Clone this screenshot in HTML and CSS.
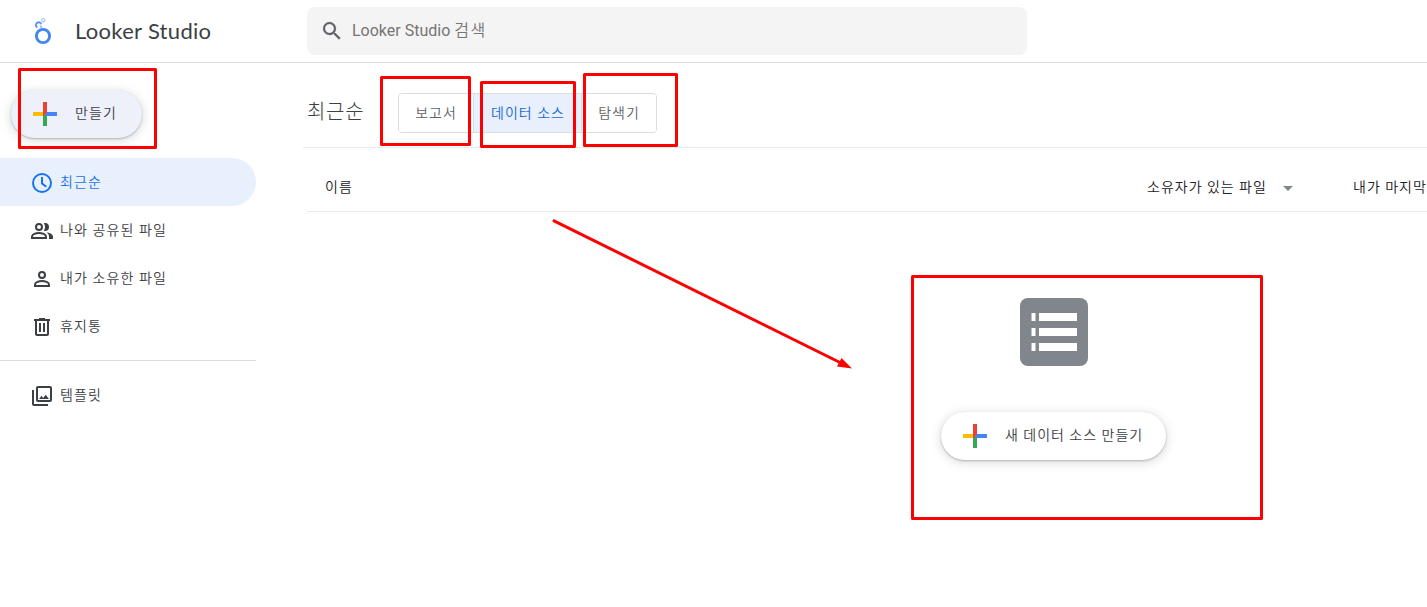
FILE: index.html
```html
<!DOCTYPE html>
<html lang="ko">
<head>
  <meta charset="UTF-8" />
  <title>Looker Studio</title>
  <meta name="viewport" content="width=device-width, initial-scale=1.0" />
  <link rel="stylesheet" href="styles.css">
</head>
<body>
  <header class="header">
    <div class="brand">
      <svg class="logo" width="24" height="30" viewBox="0 0 24 30" fill="none">
        <circle cx="12" cy="20" r="6.6" stroke="#4285f4" stroke-width="2.9" />
        <path d="M6.4 11.400A2.700 2.700 0 1 1 10.200 8.200" stroke="#5b94f5" stroke-width="1.9" />
        <path d="M9.800 9.600 10.200 12.300" stroke="#8ab4f8" stroke-width="1.6" />
        <circle cx="12.200" cy="4.300" r="1.700" stroke="#aecbfa" stroke-width="1.3" />
      </svg>
      <span class="brand-name">Looker Studio</span>
    </div>
    <div class="search">
      <svg width="24" height="24" viewBox="0 0 24 24" fill="#5f6368" stroke="#5f6368" stroke-width="0.2">
        <path d="M15.5 14h-.79l-.28-.27A6.47 6.47 0 0 0 16 9.5 6.5 6.5 0 1 0 9.5 16c1.61 0 3.09-.59 4.23-1.57l.27.28v.79l5 4.99L20.49 19l-4.99-5zm-6 0C7.01 14 5 11.99 5 9.5S7.01 5 9.5 5 14 7.01 14 9.5 11.99 14 9.5 14z" />
      </svg>
      <span>Looker Studio <span class="ko">검색</span></span>
    </div>
  </header>

  <div class="layout">
    <aside class="sidebar">
      <button class="create-btn">
        <svg width="24" height="24" viewBox="0 0 24 24" shape-rendering="crispEdges">
          <path fill="#fbbc04" d="M0 10h12v4H0z" />
          <path fill="#34a853" d="M10 12h4v12h-4z" />
          <path fill="#4285f4" d="M12 10h12v4H12z" />
          <path fill="#ea4335" d="M10 0h4v10l-4 4z" />
        </svg>
        <span>만들기</span>
      </button>

      <nav class="nav">
        <a class="nav-item active">
          <svg width="24" height="24" viewBox="0 0 24 24" fill="none" stroke="currentColor" stroke-width="2">
            <circle cx="12" cy="12" r="9" />
            <path d="M12 6v6.500l4.300 3.300" />
          </svg>
          <span>최근순</span>
        </a>
        <a class="nav-item">
          <svg width="24" height="24" viewBox="0 0 24 24" fill="none" stroke="currentColor" stroke-width="2">
            <circle cx="9" cy="8" r="3" />
            <path d="M2 19v-1.300C2 15.300 6 14 9 14s7 1.300 7 3.700V19z" />
            <path fill="currentColor" stroke="none" d="M13.700 11.800c.800-1.100 1.300-2.400 1.300-3.800s-.500-2.700-1.300-3.800c.400-.100.800-.200 1.300-.200a4 4 0 0 1 0 8c-.500 0-.900-.100-1.300-.200zM16.700 13.200C19.500 13.600 23 15 23 17.500V20h-4v-2.500c0-1.800-.900-3.200-2.300-4.300z" />
          </svg>
          <span>나와 공유된 파일</span>
        </a>
        <a class="nav-item">
          <svg width="24" height="24" viewBox="0 0 24 24" fill="none" stroke="currentColor" stroke-width="2">
            <circle cx="12" cy="8" r="3" />
            <path d="M5 19v-1.300C5 15.300 9 14 12 14s7 1.300 7 3.700V19z" />
          </svg>
          <span>내가 소유한 파일</span>
        </a>
        <a class="nav-item">
          <svg width="24" height="24" viewBox="0 0 24 24" fill="currentColor">
            <path d="M15 4V3H9v1H4v2h1v13c0 1.100.9 2 2 2h10c1.100 0 2-.9 2-2V6h1V4h-5zm2 15H7V6h10v13zM9 8h2v9H9zm4 0h2v9h-2z" />
          </svg>
          <span>휴지통</span>
        </a>
      </nav>

      <nav class="nav templates">
        <a class="nav-item">
          <svg width="24" height="24" viewBox="0 0 24 24" fill="currentColor">
            <path d="M20 4v12H8V4h12m0-2H8c-1.100 0-2 .9-2 2v12c0 1.100.9 2 2 2h12c1.100 0 2-.9 2-2V4c0-1.100-.9-2-2-2zm-8.500 9.670 1.690 2.260 2.480-3.100L19 15H9zM2 6v14c0 1.100.9 2 2 2h14v-2H4V6H2z" />
          </svg>
          <span>템플릿</span>
        </a>
      </nav>
    </aside>

    <main class="main">
      <div class="toolbar">
        <h1>최근순</h1>
        <div class="tabs">
          <button class="tab">보고서</button>
          <button class="tab selected">데이터 소스</button>
          <button class="tab">탐색기</button>
        </div>
      </div>

      <div class="table-head">
        <span class="col-name">이름</span>
        <span class="col-owner">소유자가 있는 파일
          <svg width="10" height="5" viewBox="0 0 10 5"><path d="M0 0h10L5 5z" fill="#80868b" /></svg>
        </span>
        <span class="col-opened">내가 마지막으로</span>
      </div>

      <div class="empty">
        <svg width="68" height="68" viewBox="0 0 68 68">
          <rect width="68" height="68" rx="8" fill="#80868b" />
          <path fill="#fff" d="M11.500 15h4v8h-4zM19 15h38v8H19zM11.500 30h4v8h-4zM19 30h38v8H19zM11.500 45h4v8h-4zM19 45h38v8H19z" />
        </svg>
        <button class="create-btn create-source">
          <svg width="24" height="24" viewBox="0 0 24 24" shape-rendering="crispEdges">
            <path fill="#fbbc04" d="M0 10h12v4H0z" />
            <path fill="#34a853" d="M10 12h4v12h-4z" />
            <path fill="#4285f4" d="M12 10h12v4H12z" />
            <path fill="#ea4335" d="M10 0h4v10l-4 4z" />
          </svg>
          <span>새 데이터 소스 만들기</span>
        </button>
      </div>
    </main>
  </div>

  <!-- red guide marks over the page -->
  <svg class="marks" width="1427" height="607" viewBox="0 0 1427 607" fill="none" stroke="#f00" stroke-width="3" stroke-linejoin="round">
    <rect x="19.500" y="69.500" width="136" height="78" />
    <rect x="381.500" y="77.500" width="88" height="67" />
    <rect x="481.500" y="82.500" width="93" height="64" />
    <rect x="584.500" y="74.500" width="92" height="71" />
    <rect x="912.500" y="276.500" width="349" height="242" />
    <path d="M554 220.800 842 363.500" stroke-linecap="round" />
    <path d="M841.500 358 852 368.500 837 366.500z" fill="#f00" stroke="none" />
  </svg>
</body>
</html>
```
FILE: styles.css
```css
* {
  box-sizing: border-box;
}

body {
  margin: 0;
  height: 100vh;
  overflow: hidden;
  background: #fff;
  color: #3c4043;
  font-family: Roboto, "Noto Sans CJK KR", sans-serif;
  font-size: 14px;
  font-weight: 350;
}

button {
  font: inherit;
  color: inherit;
  letter-spacing: inherit;
  cursor: pointer;
}

svg {
  flex: none;
}

.header {
  display: flex;
  height: 63px;
  border-bottom: 1px solid #dadce0;
  font-weight: 400;
}

.brand {
  display: flex;
  align-items: center;
  width: 307px;
  padding-left: 31px;
}

.brand-name {
  margin: -2px 0 0 20px;
  font-family: Lato, sans-serif;
  font-size: 22px;
  letter-spacing: 0.3px;
}

.search {
  display: flex;
  align-items: center;
  gap: 8px;
  width: 720px;
  height: 48px;
  margin-top: 7px;
  padding-left: 13px;
  border-radius: 8px;
  background: #f4f4f4;
  color: #757575;
  font-size: 16px;
}

.search > span {
  margin-top: -4px;
}

.ko {
  font-weight: 350;
  letter-spacing: 1.5px;
}

.layout {
  display: flex;
}

.sidebar {
  flex: none;
  width: 256px;
  padding-top: 27px;
  letter-spacing: 1.1px;
}

.create-btn {
  display: flex;
  align-items: center;
  gap: 18px;
  width: 131px;
  height: 48px;
  margin: 0 0 0 11px;
  padding: 0 0 0 22px;
  border: none;
  border-radius: 24px;
  background: #eef1fa;
  box-shadow: 0 1px 2px rgba(60, 64, 67, 0.3), 0 2px 8px 2px rgba(60, 64, 67, 0.15);
  white-space: nowrap;
}

.create-btn span {
  margin-top: -4px;
}

.nav {
  margin-top: 20px;
}

.nav-item {
  display: flex;
  align-items: center;
  gap: 6px;
  height: 48px;
  padding: 2px 0 0 30px;
}

.nav-item span {
  margin-top: -5px;
}

.nav-item.active {
  border-radius: 0 24px 24px 0;
  background: #e8f0fe;
  color: #1a73e8;
}

.templates {
  margin-top: 10px;
  padding-top: 10px;
  border-top: 1px solid #dadce0;
}

.main {
  flex: 1;
  min-width: 0;
  margin-left: 47px;
}

.toolbar {
  display: flex;
  align-items: center;
  height: 85px;
  padding: 15px 0 0 4px;
  border-bottom: 1px solid #e8eaed;
}

h1 {
  width: 91px;
  margin: -5px 0 0;
  font-size: 20px;
  font-weight: 300;
  letter-spacing: 0.7px;
}

.tabs {
  display: flex;
  height: 40px;
  border: 1px solid #dadce0;
  border-radius: 4px;
  overflow: hidden;
}

.tab {
  width: 74px;
  padding: 0 0 2px;
  border: none;
  background: #fff;
  color: #5f6368;
  letter-spacing: 1px;
}

.tab.selected {
  width: 109px;
  padding-left: 1px;
  border: solid #dadce0;
  border-width: 0 1px;
  background: #e8f0fe;
  color: #1967d2;
}

.table-head {
  display: flex;
  align-items: center;
  height: 64px;
  margin-left: 4px;
  padding: 13px 0 0 18px;
  border-bottom: 1px solid #e8eaed;
  color: #202124;
  letter-spacing: 1px;
  white-space: nowrap;
  overflow: hidden;
}

.col-name {
  width: 822px;
  flex: none;
}

.col-owner {
  display: flex;
  align-items: center;
  gap: 16px;
  width: 206px;
  flex: none;
}

.col-owner svg {
  margin-top: 4px;
}

.empty {
  display: flex;
  flex-direction: column;
  align-items: center;
  gap: 46px;
  width: 226px;
  margin: 86px 0 0 638px;
}

.create-source {
  width: 225px;
  margin: 0 1px 0 0;
  background: #fff;
  letter-spacing: 1px;
}

.marks {
  position: absolute;
  top: 0;
  left: 0;
  pointer-events: none;
}
```
